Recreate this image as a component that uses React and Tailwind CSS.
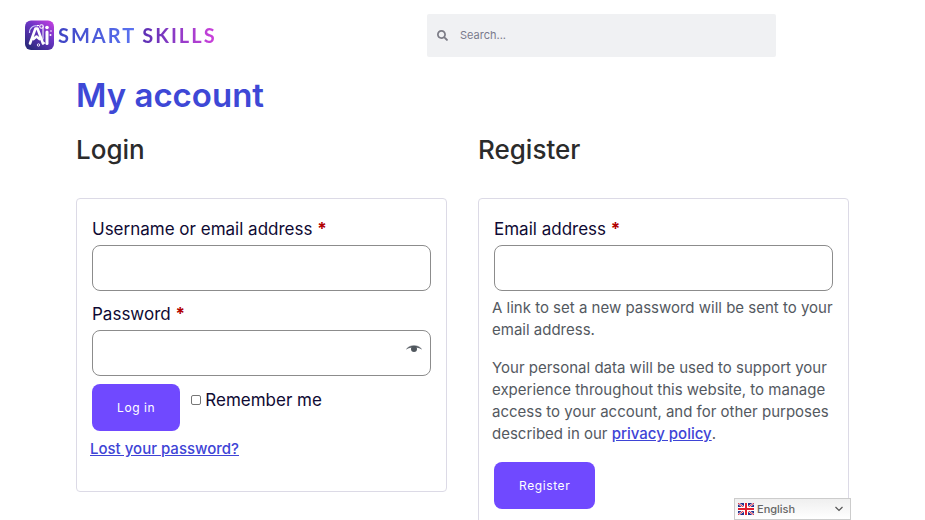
import React, { useState } from "react";
import { FaSearch } from "react-icons/fa";

const Logo = () => (
  <a href="#home" className="flex items-center gap-[3px]" aria-label="AI Smart Skills">
    <svg viewBox="0 0 30 30" className="h-[30px] w-[30px] shrink-0" fill="none" aria-hidden="true">
      <defs>
        <linearGradient id="badge" x1="27" y1="1" x2="6" y2="29" gradientUnits="userSpaceOnUse">
          <stop offset="0" stopColor="#c43fe0" />
          <stop offset="0.45" stopColor="#6a35c4" />
          <stop offset="1" stopColor="#2c2a7c" />
        </linearGradient>
      </defs>
      <rect x="0" y="0.5" width="29" height="29.5" rx="6" fill="url(#badge)" />
      <path d="M4.500 13C4.500 7 9 5 13 6" stroke="#cfd0ff" strokeWidth="1.200" />
      <path d="M5 23.500 10.500 8.500h2L18 23.500M8.500 19l3-2.500 3 2.500" stroke="#fff" strokeWidth="2.600" strokeLinejoin="round" strokeLinecap="round" />
      <path d="M22 12v11.500" stroke="#fff" strokeWidth="3" strokeLinecap="round" />
      <path d="M12 5.500h2M18 6.500v13M19 22l1 2" stroke="#fff" strokeWidth="1" />
      <circle cx="16.500" cy="6.500" r="1.800" stroke="#fff" strokeWidth="1.100" />
      <circle cx="22" cy="7.500" r="1.800" fill="#fff" />
      <circle cx="26" cy="11" r="0.800" fill="#fff" />
      <circle cx="25.500" cy="15" r="1" fill="#fff" />
      <circle cx="13.500" cy="25" r="1.200" stroke="#fff" strokeWidth="0.900" />
    </svg>
    <span className="flex gap-1.5 font-['Lato'] text-xl font-bold leading-[30px] tracking-[2px]">
      <span className="bg-linear-to-r from-[#3f43c4] to-[#5b74f2] bg-clip-text text-transparent">
        SMART
      </span>
      <span className="bg-linear-to-r from-[#5a2fb4] to-[#cf40dc] bg-clip-text text-transparent">
        SKILLS
      </span>
    </span>
  </a>
);

const Flag = () => (
  <svg viewBox="0 0 16 12" className="pointer-events-none absolute left-1 top-[5px] h-3 w-4" aria-hidden="true">
    <rect width="16" height="12" fill="#23308c" />
    <path d="M0 0 16 12M16 0 0 12" stroke="#fff" strokeWidth="2" />
    <path d="M0 0 16 12M16 0 0 12" stroke="#e0283c" strokeWidth="1" />
    <path d="M8 0v12M0 6h16" stroke="#fff" strokeWidth="4" />
    <path d="M8 0v12M0 6h16" stroke="#e0202f" strokeWidth="2" />
  </svg>
);

const Field = ({ id, label, type, children }) => (
  <div className="px-0.5">
    <label htmlFor={id} className="block text-[17px] leading-8 text-[#0f0a33]">
      {label} <span className="font-bold text-[#b20000]">*</span>
    </label>
    <div className="relative">
      <input
        id={id}
        type={type}
        required
        className="block h-[46px] w-full rounded-lg border border-[#8c8c8c] bg-white px-4 text-base outline-none"
      />
      {children}
    </div>
  </div>
);

const cardStyle =
  "mt-[23px] rounded-sm border border-[#dcdae6] px-[13px] pb-[29px] pt-3.5";
const buttonStyle =
  "h-[47px] rounded-lg bg-[#7049ff] px-[25px] text-xs tracking-wider text-white";
const linkStyle = "font-medium text-[#3e44d6] underline";

const App = () => {
  const [showPassword, setShowPassword] = useState(false);

  return (
    <div className="min-h-screen bg-white font-['Inter',sans-serif]">
      <header className="flex items-start pl-[25px] pt-3.5">
        <div className="w-[402px] shrink-0 pt-1.5">
          <Logo />
        </div>
        <form role="search" className="mr-[149px] flex h-[43px] flex-1 items-center gap-3 rounded-xs bg-[#f0f1f3] px-2.5">
          <FaSearch className="h-[11px] w-[11px] shrink-0 text-[#7c7c86]" />
          <input
            type="search"
            aria-label="Search"
            placeholder="Search..."
            className="w-full bg-transparent text-[11px] text-[#55556a] outline-none placeholder:text-[#7a7a8c]"
          />
        </form>
      </header>

      <main className="px-[76px] pt-4">
        <h1 className="text-[33px] font-semibold leading-[44px] text-[#3e48d6]">My account</h1>

        <div className="mt-2 grid grid-cols-2 gap-[31px]">
          <section>
            <h2 className="text-[26px] font-medium leading-[50px] text-[#2b2b2b]">Login</h2>
            <form className={cardStyle}>
              <Field id="username" label="Username or email address" type="text" />
              <div className="mt-[7px]">
                <Field id="password" label="Password" type={showPassword ? "text" : "password"}>
                  <button
                    type="button"
                    aria-label="Show password"
                    onClick={() => setShowPassword(!showPassword)}
                    className="absolute right-2 top-3"
                  >
                    <svg viewBox="0 0 18 12" className="h-3 w-[18px]" aria-hidden="true">
                      <path d="M1.500 7C5 2.500 13 2.500 16.500 7 13 4.500 5 4.500 1.500 7Z" fill="#50575e" stroke="#50575e" strokeWidth="0.500" />
                      <circle cx="9" cy="7" r="3" fill="#50575e" />
                    </svg>
                  </button>
                </Field>
              </div>
              <div className="mt-2 flex items-start gap-[11px] px-0.5">
                <button type="button" className={buttonStyle}>
                  Log in
                </button>
                <label className="flex items-center gap-1 text-[17px] leading-8 text-[#0f0a33]">
                  <input
                    type="checkbox"
                    className="h-2.5 w-2.5 appearance-none rounded-[2px] border border-[#767676] bg-white checked:bg-[#7049ff]"
                  />
                  <span>Remember me</span>
                </label>
              </div>
              <p className="mt-[5px] text-[15px] leading-[26px]">
                <a href="#lost-password" className={linkStyle}>
                  Lost your password?
                </a>
              </p>
            </form>
          </section>

          <section>
            <h2 className="text-[26px] font-medium leading-[50px] text-[#2b2b2b]">Register</h2>
            <form className={cardStyle}>
              <Field id="email" label="Email address" type="email" />
              <p className="mt-1.5 text-[15px] leading-[22px] text-[#54595f]">
                A link to set a new password will be sent to your email address.
              </p>
              <p className="mt-4 text-[15px] leading-[22px] text-[#54595f]">
                Your personal data will be used to support your experience throughout this website, to
                manage access to your account, and for other purposes described in our{" "}
                <a href="#privacy" className={linkStyle}>
                  privacy policy
                </a>
                .
              </p>
              <div className="mt-[17px] px-0.5">
                <button type="button" className={buttonStyle}>
                  Register
                </button>
              </div>
            </form>
          </section>
        </div>
      </main>

      {/* Language switcher */}
      <div className="fixed bottom-0 right-[74px] w-[117px]">
        <Flag />
        <select
          aria-label="Language"
          className="block h-[22px] w-full appearance-none border border-[#cccccc] bg-linear-to-b from-[#efefef] to-white pl-[22px] text-[11px] font-medium text-[#666666]"
        >
          <option>English</option>
        </select>
        <svg viewBox="0 0 8 6" className="pointer-events-none absolute right-2 top-2 h-1.5 w-2" fill="none" aria-hidden="true">
          <path d="M0.500 1 4 4.500 7.500 1" stroke="#555" strokeWidth="1.200" />
        </svg>
      </div>
    </div>
  );
};

export default App;
